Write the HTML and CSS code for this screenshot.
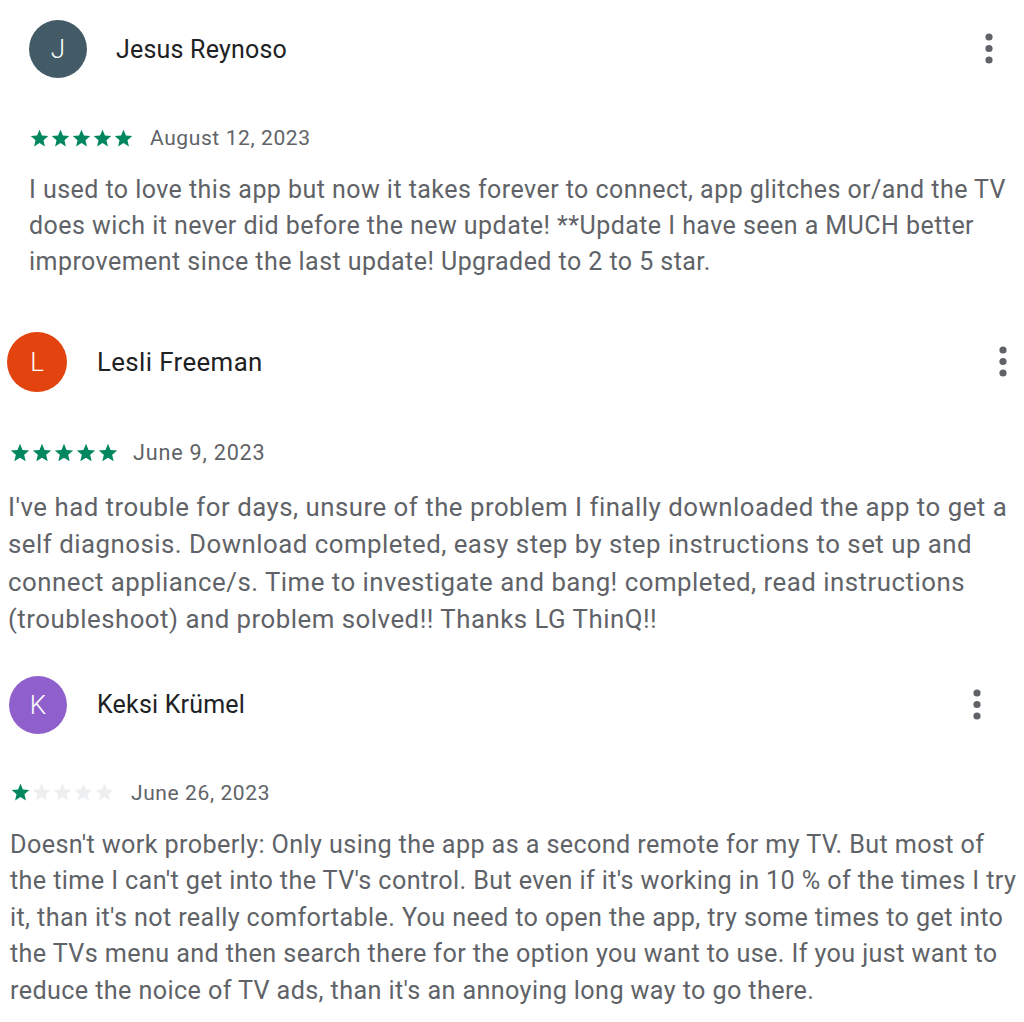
FILE: index.html
```html
<!DOCTYPE html>
<html lang="en">
<head>
<meta charset="utf-8">
<title>Reviews</title>
<link rel="stylesheet" href="styles.css">
</head>
<body>
<div class="reviews">
  <article class="review review-1">
    <header class="review-head">
      <div class="avatar avatar-slate">J</div>
      <div class="name">Jesus Reynoso</div>
      <button class="more" aria-label="More options"><svg viewBox="0 0 8 32" width="8" height="32"><circle cx="4" cy="4" r="3.6"/><circle cx="4" cy="15.5" r="3.6"/><circle cx="4" cy="27" r="3.6"/></svg></button>
    </header>
    <div class="meta">
      <div class="stars" aria-label="5 stars">
        <svg class="star on" viewBox="0 0 24 24"><path d="M12 17.27L18.18 21l-1.64-7.03L22 9.24l-7.19-.61L12 2 9.19 8.63 2 9.24l5.46 4.73L5.82 21z"/></svg>
        <svg class="star on" viewBox="0 0 24 24"><path d="M12 17.27L18.18 21l-1.64-7.03L22 9.24l-7.19-.61L12 2 9.19 8.63 2 9.24l5.46 4.73L5.82 21z"/></svg>
        <svg class="star on" viewBox="0 0 24 24"><path d="M12 17.27L18.18 21l-1.64-7.03L22 9.24l-7.19-.61L12 2 9.19 8.63 2 9.24l5.46 4.73L5.82 21z"/></svg>
        <svg class="star on" viewBox="0 0 24 24"><path d="M12 17.27L18.18 21l-1.64-7.03L22 9.24l-7.19-.61L12 2 9.19 8.63 2 9.24l5.46 4.73L5.82 21z"/></svg>
        <svg class="star on" viewBox="0 0 24 24"><path d="M12 17.27L18.18 21l-1.64-7.03L22 9.24l-7.19-.61L12 2 9.19 8.63 2 9.24l5.46 4.73L5.82 21z"/></svg>
      </div>
      <span class="date">August 12, 2023</span>
    </div>
    <p class="text">I used to love this app but now it takes forever to connect, app glitches or/and the TV does wich it never did before the new update! **Update I have seen a MUCH better improvement since the last update! Upgraded to 2 to 5 star.</p>
  </article>

  <article class="review review-2">
    <header class="review-head">
      <div class="avatar avatar-orange">L</div>
      <div class="name">Lesli Freeman</div>
      <button class="more" aria-label="More options"><svg viewBox="0 0 8 32" width="8" height="32"><circle cx="4" cy="4" r="3.6"/><circle cx="4" cy="15.5" r="3.6"/><circle cx="4" cy="27" r="3.6"/></svg></button>
    </header>
    <div class="meta">
      <div class="stars" aria-label="5 stars">
        <svg class="star on" viewBox="0 0 24 24"><path d="M12 17.27L18.18 21l-1.64-7.03L22 9.24l-7.19-.61L12 2 9.19 8.63 2 9.24l5.46 4.73L5.82 21z"/></svg>
        <svg class="star on" viewBox="0 0 24 24"><path d="M12 17.27L18.18 21l-1.64-7.03L22 9.24l-7.19-.61L12 2 9.19 8.63 2 9.24l5.46 4.73L5.82 21z"/></svg>
        <svg class="star on" viewBox="0 0 24 24"><path d="M12 17.27L18.18 21l-1.64-7.03L22 9.24l-7.19-.61L12 2 9.19 8.63 2 9.24l5.46 4.73L5.82 21z"/></svg>
        <svg class="star on" viewBox="0 0 24 24"><path d="M12 17.27L18.18 21l-1.64-7.03L22 9.24l-7.19-.61L12 2 9.19 8.63 2 9.24l5.46 4.73L5.82 21z"/></svg>
        <svg class="star on" viewBox="0 0 24 24"><path d="M12 17.27L18.18 21l-1.64-7.03L22 9.24l-7.19-.61L12 2 9.19 8.63 2 9.24l5.46 4.73L5.82 21z"/></svg>
      </div>
      <span class="date">June 9, 2023</span>
    </div>
    <p class="text">I've had trouble for days, unsure of the problem I finally downloaded the app to get a self diagnosis. Download completed, easy step by step instructions to set up and connect appliance/s. Time to investigate and bang! completed, read instructions (troubleshoot) and problem solved!! Thanks LG ThinQ!!</p>
  </article>

  <article class="review review-3">
    <header class="review-head">
      <div class="avatar avatar-purple">K</div>
      <div class="name">Keksi Krümel</div>
      <button class="more" aria-label="More options"><svg viewBox="0 0 8 32" width="8" height="32"><circle cx="4" cy="4" r="3.6"/><circle cx="4" cy="15.5" r="3.6"/><circle cx="4" cy="27" r="3.6"/></svg></button>
    </header>
    <div class="meta">
      <div class="stars" aria-label="1 star">
        <svg class="star on" viewBox="0 0 24 24"><path d="M12 17.27L18.18 21l-1.64-7.03L22 9.24l-7.19-.61L12 2 9.19 8.63 2 9.24l5.46 4.73L5.82 21z"/></svg>
        <svg class="star off" viewBox="0 0 24 24"><path d="M12 17.27L18.18 21l-1.64-7.03L22 9.24l-7.19-.61L12 2 9.19 8.63 2 9.24l5.46 4.73L5.82 21z"/></svg>
        <svg class="star off" viewBox="0 0 24 24"><path d="M12 17.27L18.18 21l-1.64-7.03L22 9.24l-7.19-.61L12 2 9.19 8.63 2 9.24l5.46 4.73L5.82 21z"/></svg>
        <svg class="star off" viewBox="0 0 24 24"><path d="M12 17.27L18.18 21l-1.64-7.03L22 9.24l-7.19-.61L12 2 9.19 8.63 2 9.24l5.46 4.73L5.82 21z"/></svg>
        <svg class="star off" viewBox="0 0 24 24"><path d="M12 17.27L18.18 21l-1.64-7.03L22 9.24l-7.19-.61L12 2 9.19 8.63 2 9.24l5.46 4.73L5.82 21z"/></svg>
      </div>
      <span class="date">June 26, 2023</span>
    </div>
    <p class="text">Doesn't work proberly: Only using the app as a second remote for my TV. But most of the time I can't get into the TV's control. But even if it's working in 10 % of the times I try it, than it's not really comfortable. You need to open the app, try some times to get into the TVs menu and then search there for the option you want to use. If you just want to reduce the noice of TV ads, than it's an annoying long way to go there.</p>
  </article>
</div>
</body>
</html>
```

FILE: styles.css
```css
* { box-sizing: border-box; }

html, body {
  margin: 0;
  padding: 0;
  background: #ffffff;
}

body {
  font-family: Roboto, "Noto Sans", "Liberation Sans", sans-serif;
  width: 1024px;
  height: 1022px;
  overflow: hidden;
}

.review-head {
  display: flex;
  align-items: center;
}

.avatar {
  flex: none;
  width: 58px;
  height: 58px;
  border-radius: 50%;
  color: #ffffff;
  display: flex;
  align-items: center;
  justify-content: center;
  font-size: 26px;
  font-weight: 300;
}

.avatar-slate { background: #435b66; }
.avatar-orange { background: #e2430f; }
.avatar-purple { background: #8f60cc; }

.name {
  color: #202124;
  font-size: 25px;
  letter-spacing: 0.2px;
}

.more {
  margin-left: auto;
  padding: 0;
  border: 0;
  background: none;
  display: flex;
  fill: #5f6368;
}

.meta {
  display: flex;
  align-items: center;
}

.stars {
  display: flex;
}

.star {
  width: 21px;
  height: 21px;
  display: block;
}

.star.on { fill: #01875f; }
.star.off { fill: #eceef0; }

.date {
  color: #5f6368;
  font-size: 21px;
  letter-spacing: 0.6px;
}

.text {
  margin: 0;
  color: #5f6368;
  font-size: 25px;
  line-height: 36px;
  letter-spacing: 0.45px;
}

/* Review 1 */
.review-1 {
  padding: 20px 0 0 29px;
}
.review-1 .name { margin-left: 29px; }
.review-1 .more { margin-right: 31px; }
.review-1 .meta { margin-top: 48px; }
.review-1 .date { margin-left: 16px; }
.review-1 .text { margin-top: 22px; }

/* Review 2 */
.review-2 {
  padding: 52px 0 0 7px;
}
.review-2 .avatar { width: 60px; height: 60px; }
.review-2 .name { margin-left: 30px; font-size: 25.8px; letter-spacing: 0.4px; }
.review-2 .more { margin-right: 17px; }
.review-2 .meta { margin-top: 48px; padding-left: 2px; }
.review-2 .star { width: 22px; height: 22px; }
.review-2 .date { margin-left: 14px; font-size: 21.6px; letter-spacing: 0.8px; }
.review-2 .text { margin-top: 24px; padding-left: 1px; font-size: 25.8px; line-height: 37.4px; letter-spacing: 0.5px; }

/* Review 3 */
.review-3 {
  padding: 37px 0 0 9px;
}
.review-3 .name { margin-left: 30px; }
.review-3 .more { margin-right: 43px; }
.review-3 .meta { margin-top: 47px; padding-left: 1px; }
.review-3 .date { margin-left: 16px; }
.review-3 .text { margin-top: 22px; padding-left: 1px; font-size: 25.2px; line-height: 36.5px; letter-spacing: 0.38px; }
```
